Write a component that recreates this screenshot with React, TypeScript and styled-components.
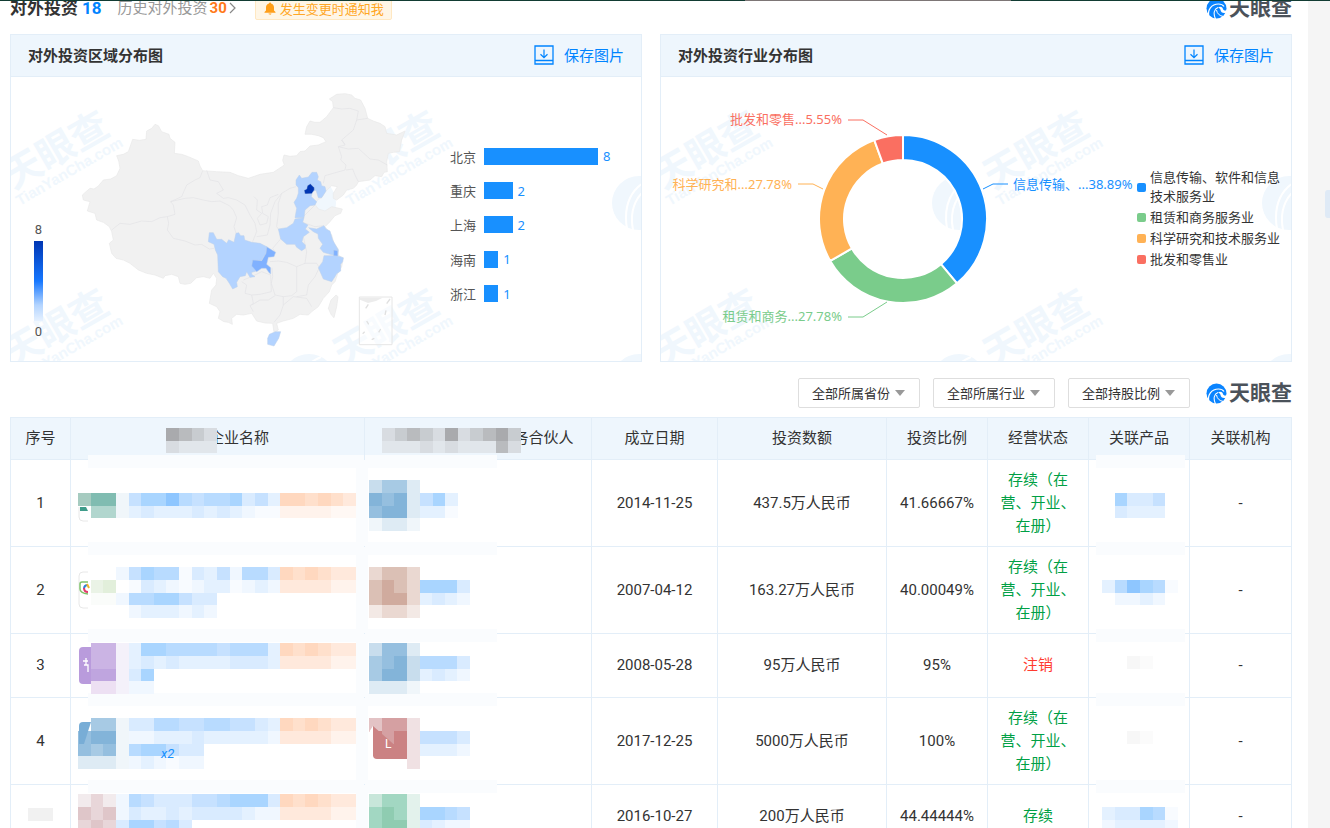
import React from "react";
import styled, { createGlobalStyle, css } from "styled-components";

const BLUE = "#1890ff";
const LINE = "#e3eef8";

const GlobalStyle = createGlobalStyle`
  *, *::before, *::after { box-sizing: border-box; }
  body {
    margin: 0;
    background: #fff;
    color: #333;
    font-family: Roboto, "Noto Sans CJK SC", sans-serif;
    font-size: 15px;
  }
  button, select { font-family: inherit; }
  h2, h3 { margin: 0; }
`;

/* ---------- page frame ---------- */

const Page = styled.div`
  display: flex;
  height: 100vh;
  overflow: hidden;
  position: relative;
`;

const TopEdge = styled.div`
  position: absolute;
  top: 0;
  left: 0;
  right: 0;
  height: 1px;
  z-index: 5;
  background: linear-gradient(90deg, #123c33 0 56%, #7d7676 56% 76%, #123c33 76%);
`;

const Main = styled.main`
  flex: 1;
  min-width: 0;
  padding: 0 16px 0 10px;
`;

const Rail = styled.aside`
  flex: none;
  width: 22px;
  background: #f5f5f5;
  display: flex;
  justify-content: flex-end;
  padding-top: 190px;
`;

const RailTab = styled.div`
  width: 5px;
  height: 28px;
  background: #dfeaf6;
  border-radius: 3px 0 0 3px;
`;

const Header = styled.header`
  display: flex;
  align-items: center;
  height: 24px;
  margin: -4px 0 14px;
`;

const Title = styled.h2`
  display: flex;
  gap: 4px;
  font-size: 17px;
  font-weight: 700;
  line-height: 24px;
`;

const Count = styled.span`
  color: #0084ff;
`;

const HistoryLink = styled.a`
  display: flex;
  align-items: center;
  gap: 2px;
  margin-left: 16px;
  color: #999;
  line-height: 24px;
  text-decoration: none;
  strong { color: #ff7a1a; }
`;

const NotifyButton = styled.button`
  display: flex;
  align-items: center;
  gap: 4px;
  height: 24px;
  margin-left: 19px;
  padding: 0 7px 0 8px;
  border: 1px solid #ffe8c2;
  border-radius: 2px;
  background: #fff6e6;
  color: #ffa726;
  font-size: 13px;
`;

const Brand = styled.div`
  display: flex;
  align-items: center;
  gap: 2px;
  margin-left: auto;
  color: #4b525a;
  font-size: 21px;
  font-weight: 700;
  line-height: 24px;
`;

/* ---------- chart panels ---------- */

const Panels = styled.section`
  display: grid;
  grid-template-columns: 1fr 1fr;
  gap: 18px;
`;

const PanelBox = styled.article`
  min-width: 0;
  border: 1px solid ${LINE};
`;

const PanelHead = styled.div`
  display: flex;
  align-items: center;
  justify-content: space-between;
  height: 42px;
  padding: 0 17px 2px;
  background: #eef6fd;
  border-bottom: 1px solid ${LINE};
`;

const PanelTitle = styled.h3`
  font-size: 15px;
  font-weight: 700;
`;

const SaveButton = styled.button`
  display: flex;
  align-items: center;
  gap: 10px;
  padding: 0;
  border: 0;
  background: none;
  color: #0084ff;
  font-size: 15px;
`;

const PanelBody = styled.div`
  position: relative;
  overflow: hidden;
  height: 284px;
`;

const WatermarkSvg = styled.svg`
  position: absolute;
  top: 0;
  left: 0;
`;

const ChartRow = styled.div`
  position: relative;
  display: flex;
  height: 100%;
`;

const MapRow = styled(ChartRow)`
  padding: 8px 0 6px 23px;
`;

const Scale = styled.div`
  display: flex;
  flex-direction: column;
  align-items: center;
  align-self: flex-end;
  flex: none;
  width: 9px;
  margin: 0 27px 12px 0;
  color: #555;
  font-size: 13px;
  line-height: 22px;
`;

const ScaleBar = styled.div`
  width: 9px;
  height: 80px;
  background: linear-gradient(#0036b3, #1677ff 50%, #b3d4ff 80%, #e6f1ff);
`;

const MapSvg = styled.svg`
  flex: 0 1 350px;
  min-width: 0;
  height: 270px;
`;

const Bars = styled.div`
  display: grid;
  grid-auto-rows: 1fr;
  align-items: center;
  height: 172px;
  margin: 54px 0 0 30px;
  font-size: 13px;
`;

const BarRow = styled.div`
  display: flex;
  align-items: center;
  gap: 8px;
  color: #555;
`;

const Track = styled.div`
  display: flex;
  align-items: center;
  width: 114px;
`;

const Bar = styled.div`
  flex: none;
  height: 17px;
  background: ${BLUE};
`;

const BarValue = styled.span`
  margin-left: 5px;
  color: ${BLUE};
  font-family: "Noto Sans", sans-serif;
`;

const DonutSvg = styled.svg`
  flex: 0 1 470px;
  min-width: 0;
  height: 284px;
  overflow: visible;
  font-family: "Noto Sans", "Noto Sans CJK SC", sans-serif;
  font-size: 13px;
`;

const Legend = styled.ul`
  list-style: none;
  width: 146px;
  margin: 91px 0 0 6px;
  padding: 0;
  display: flex;
  flex-direction: column;
  gap: 2px;
  font-size: 13px;
  line-height: 19px;
`;

const LegendItem = styled.li`
  display: flex;
  align-items: center;
  gap: 4px;
`;

const Swatch = styled.i<{ $color: string }>`
  flex: none;
  width: 9px;
  height: 9px;
  border-radius: 2px;
  background: ${(p) => p.$color};
`;

/* ---------- filters ---------- */

const Toolbar = styled.div`
  display: flex;
  justify-content: flex-end;
  align-items: center;
  gap: 13px;
  margin: 16px 0 9px;
`;

const SelectWrap = styled.label`
  position: relative;
  display: block;
  &::after {
    content: "";
    position: absolute;
    right: 15px;
    top: 12px;
    border: 5px solid transparent;
    border-top: 6px solid #999;
    border-bottom: 0;
    pointer-events: none;
  }
`;

const Select = styled.select`
  appearance: none;
  width: 122px;
  height: 30px;
  padding: 0 26px 0 13px;
  border: 1px solid #dedede;
  border-radius: 2px;
  background: #fff;
  color: #333;
  font-size: 13px;
`;

const ToolbarBrand = styled(Brand)`
  margin-left: 3px;
`;

/* ---------- table ---------- */

const Table = styled.table`
  width: 100%;
  table-layout: fixed;
  border-collapse: collapse;
  line-height: 23px;
  text-align: center;
`;

const Col = styled.col<{ $w?: number }>`
  ${(p) => p.$w && css`width: ${p.$w}px;`}
`;

const Th = styled.th`
  height: 42px;
  padding: 0;
  border: 1px solid ${LINE};
  background: #eef6fd;
  font-weight: 400;
`;

const HeadCell = styled.div`
  display: flex;
  align-items: center;
  justify-content: center;
  svg {
    position: relative;
    margin: 4px -8px 0 0;
  }
`;

const Tr = styled.tr<{ $short?: boolean }>`
  height: ${(p) => (p.$short ? 64 : 87)}px;
`;

const Td = styled.td`
  padding: 0 10px;
  border: 1px solid ${LINE};
`;

const veil = css`
  content: "";
  position: absolute;
  background: #fafcfe;
`;

/* Cells whose content is pixelated, with a pale veil across their borders. */
const MaskedTd = styled.td<{ $kind: "name" | "partner" | "product" }>`
  position: relative;
  padding: ${(p) => (p.$kind === "name" ? "5px 0 0 7px" : p.$kind === "partner" ? "5px 0 0 4px" : "5px 0 0 2px")};
  border: 1px solid ${LINE};
  svg {
    display: block;
    position: relative;
    z-index: 1;
    margin: ${(p) => (p.$kind === "product" ? "0 auto" : "0")};
  }
  &::after {
    ${veil}
    top: -5px;
    height: 13px;
    left: ${(p) => (p.$kind === "name" ? 17 : p.$kind === "partner" ? 0 : 7)}px;
    right: ${(p) => (p.$kind === "name" ? 0 : p.$kind === "partner" ? 94 : 4)}px;
  }
  ${(p) =>
    p.$kind === "partner" &&
    css`
      &::before {
        ${veil}
        top: 0;
        bottom: 0;
        left: -9px;
        width: 12px;
      }
    `}
`;

const Status = styled.span<{ $off?: boolean }>`
  color: ${(p) => (p.$off ? "#ff3b30" : "#00a045")};
`;

/* ---------- drawings ---------- */

function BrandMark({ size = 21 }: { size?: number }) {
  return (
    <svg width={size} height={size} viewBox="0 0 42 42" aria-hidden="true">
      <circle cx="21" cy="21" r="20" fill="#0a84ff" />
      <path d="M6 38C2 24 11 12 25 12c5 0 9 2 11 5" fill="none" stroke="#fff" strokeWidth="2.4" />
      <path d="M24 19c4-3 9-1 10 3 1 3 4 4 8 2v5c-8 3-12 0-13-5-1-3-2-4-5-5z" fill="#fff" />
      <path d="M24 19c-8 3-10 12-5 23" fill="none" stroke="#fff" strokeWidth="2.2" />
      <path d="M21 24c1 7 6 12 14 13" fill="none" stroke="#fff" strokeWidth="2" />
    </svg>
  );
}

function SaveIcon() {
  return (
    <svg width="20" height="20" viewBox="0 0 20 20" fill="none" stroke="#0084ff" aria-hidden="true">
      <path d="M1 1h18v18H1zM1 15.5h18" strokeWidth="1.3" />
      <path d="M10 4.5v8M6.5 9.3l3.5 3.4 3.5-3.4" strokeWidth="1.2" />
    </svg>
  );
}

function BellIcon() {
  return (
    <svg width="12" height="13" viewBox="0 0 12 13" fill="#ff9f1a" aria-hidden="true">
      <path d="M6 0.5c.6 0 1 .4 1 .9 1.9.4 3 2 3 4V8.600l1.500 1.500v.6H.5v-.6L2 8.600V5.400c0-2 1.100-3.600 3-4 0-.5.4-.9 1-.9zM4.500 11.500h3c-.2.800-.8 1.200-1.500 1.200s-1.300-.4-1.500-1.200z" />
    </svg>
  );
}

function Watermark() {
  const spots = [[46, 75], [376, 75], [46, 253], [376, 253]];
  const marks = [[298, 126], [628, 126], [298, 304], [628, 304]];
  return (
    <WatermarkSvg width="100%" height="284" aria-hidden="true">
      {spots.map(([x, y], i) => (
        <g key={i} transform={`translate(${x} ${y}) rotate(-30)`} fill="#f0f7fd" textAnchor="middle" fontWeight="700">
          <text y="11" fontSize="38" fontFamily="Noto Sans CJK SC, sans-serif">天眼查</text>
          <text x="1" y="28" fontSize="15" fontFamily="Liberation Sans, sans-serif">TianYanCha.com</text>
        </g>
      ))}
      {marks.map(([x, y], i) => (
        <g key={i} transform={`translate(${x} ${y})`}>
          <circle r="27" fill="#f0f7fd" />
          <path d="M-12 26C-16 2-8-16 12-24M-6 27C-10 6-2-10 12-16" fill="none" stroke="#fff" strokeWidth="2" />
        </g>
      ))}
    </WatermarkSvg>
  );
}

const COUNTRY =
  "M37 330L48 320 60 310 72 312 85 303 100 285 122 282 140 272 150 250 146 228 140 212 160 208 175 200 182 180 188 163 208 166 228 163 230 138 245 130 255 118 265 122 275 140 297 148 300 160 315 172 313 205 335 208 355 215 385 228 390 243 398 257 440 260 480 262 505 272 535 280 570 268 610 262 625 252 643 240 638 226 642 210 660 214 680 212 690 200 705 198 720 183 745 180 768 170 760 158 745 152 725 148 705 148 710 125 720 108 735 112 750 112 770 95 790 68 788 50 778 42 800 28 825 26 845 30 855 40 872 45 885 70 893 100 910 108 930 115 945 125 950 145 980 150 1005 138 995 165 988 200 970 202 955 205 950 230 952 260 942 262 935 275 915 272 900 285 865 290 860 300 850 310 830 315 820 330 800 345 790 340 790 325 802 305 785 302 768 318 755 338 742 345 735 358 745 372 765 378 785 365 817 372 812 385 795 392 780 410 765 425 785 450 792 475 805 492 805 510 820 520 815 545 805 560 795 590 785 600 778 620 760 640 745 665 725 680 715 690 690 688 670 700 640 708 620 715 625 735 612 742 608 715 585 714 560 708 545 685 520 690 500 688 485 700 487 718 475 712 462 710 445 700 450 680 440 665 418 655 425 615 438 600 440 580 430 565 420 580 400 575 380 578 362 595 345 598 330 595 325 575 305 568 285 572 280 580 255 570 230 565 205 555 180 535 160 525 138 520 125 505 118 475 130 465 125 440 118 425 100 412 80 405 75 385 52 378 60 350 40 345Z";

const BORDERS = [
  "M125 435L150 415 180 418 215 408 245 410 270 398 292 395 315 388 310 360 302 350 335 335 350 300 375 285 390 278 398 257",
  "M292 395L296 415 292 435 310 460 345 468 375 480 395 478 418 492 432 490",
  "M302 350L345 340 370 338 400 345 425 350 450 348 478 362 490 375 500 398 492 425 498 445",
  "M410 256L420 285 445 290 460 315 440 325 460 340 475 338 500 345 525 360 540 390 555 415 560 440 548 470",
  "M552 335L562 345 560 375 575 385 562 400 570 420 590 415 595 395 578 385 575 365 592 360 600 338 625 328",
  "M635 325L625 355 625 385 620 425 625 432M560 455L592 450 600 420 602 385 615 350 635 325 660 310 678 305",
  "M805 185L835 192 865 190 900 222 925 225 952 240M805 185L815 215 812 225 828 240 825 255 800 262 765 272 760 295",
  "M828 255L848 252 855 270 865 290M815 165L825 180 805 185M893 100L860 105 850 135 815 165 825 178M790 68L815 72 840 70 865 78 860 105",
  "M617 502L608 490 625 470 632 462M600 530L625 528 650 532 680 545 705 535 710 500 700 455M606 548L608 575 604 595 615 630 640 635 665 632 680 620 680 545",
  "M705 535L740 535 748 548 735 575 715 600 710 630 680 635M545 660L570 645 595 645 615 632M640 635L640 660 630 690 612 712M640 660L670 635 710 640 725 665",
  "M520 585L545 575 575 560 602 570 604 620 570 628 545 630 525 625 530 600 515 590M545 630L550 655 540 662 550 680",
  "M700 395L720 375 735 360M698 412L735 425 762 422",
];

const REGIONS: { d: string; fill: string }[] = [
  { fill: "#b3d3ff", d: "M418 443L430 443 440 463 455 463 470 475 476 464 492 472 498 445 506 443 512 452 522 452 524 465 545 472 570 475 590 485 588 505 575 525 548 530 550 545 560 558 545 562 545 568 555 575 540 577 530 560 526 572 510 575 500 592 502 605 488 612 478 595 468 580 458 575 445 560 443 510 436 495 432 478 415 470Z" },
  { fill: "#80b1ff", d: "M590 485L617 502 612 515 595 517 590 538 602 548 602 567 596 562 588 550 575 550 560 560 545 543 548 525 575 527 588 505Z" },
  { fill: "#b3d3ff", d: "M678 285L688 270 695 280 715 276 726 262 740 262 745 275 742 285 752 290 755 302 765 305 768 318 755 338 745 338 738 316 728 318 724 335 740 350 735 360 720 362 705 375 702 398 675 398 680 370 672 352 680 340 685 325 685 308 678 300Z" },
  { fill: "#0036b3", d: "M712 302L721 296 733 308 733 315 725 326 705 327 702 316 710 312Z" },
  { fill: "#b3d3ff", d: "M675 402L702 398 698 412 714 420 706 432 718 442 700 455 696 470 706 480 706 490 695 497 680 487 675 478 650 478 632 462 625 432 650 428 670 415Z" },
  { fill: "#b3d3ff", d: "M716 428L740 432 762 422 768 432 780 438 788 465 805 495 803 512 790 510 780 508 760 502 750 490 758 478 745 460 744 447 730 440Z" },
  { fill: "#b3d3ff", d: "M762 512L800 512 820 518 818 530 812 538 812 558 800 566 795 575 785 590 760 582 745 548 758 530Z" },
  { fill: "#80b1ff", d: "M791 495L803 497 803 513 791 512Z" },
  { fill: "#b3d3ff", d: "M598 748L616 740 632 740 626 760 612 783 593 778 593 760Z" },
];

function ChinaMap() {
  return (
    <MapSvg viewBox="0 0 1050 810" role="img" aria-label="对外投资区域分布图" strokeLinejoin="round">
      <path d={COUNTRY} fill="#f1f1f1" stroke="#e8e8e8" strokeWidth="2" />
      <path d="M798 630l6 5-4 30-8 33-8-8-9-20 8-25z" fill="#f1f1f1" stroke="#e8e8e8" strokeWidth="2" />
      {BORDERS.map((d) => (
        <path key={d} d={d} fill="none" stroke="#e2e3e5" strokeWidth="2" />
      ))}
      <path d="M728 318l10-2 4 22-8 8-10-12z" fill="#f1f1f1" />
      {REGIONS.map((r) => (
        <path key={r.d} d={r.d} fill={r.fill} stroke="#bcd0ea" strokeWidth="1.500" />
      ))}
      <path d="M868 636h98v143h-98z" fill="#fff" fillOpacity=".5" stroke="#e6e6e6" strokeWidth="3" />
      <path d="M870 638h68l-20 10-24 6-24-10z" fill="#ececec" />
      <path d="M895 658l-8 12M890 708l6 10M884 740l-6 6M905 764l8-4M926 742l6-10M945 690l3-14M950 656l10-14" stroke="#e0e0e0" strokeWidth="4" fill="none" />
    </MapSvg>
  );
}

const SLICES = [
  { name: "信息传输、软件和信息技术服务业", label: "信息传输、...38.89%", share: 38.89, color: "#1890ff", line: "322,112 332,107 347,107", x: 352, y: 112, anchor: "start" },
  { name: "租赁和商务服务业", label: "租赁和商务...27.78%", share: 27.78, color: "#7acc8b", line: "226,225 202,240 187,240", x: 181, y: 244, anchor: "end" },
  { name: "科学研究和技术服务业", label: "科学研究和...27.78%", share: 27.78, color: "#ffb255", line: "162,112 152,107 137,107", x: 131, y: 112, anchor: "end" },
  { name: "批发和零售业", label: "批发和零售...5.55%", share: 5.55, color: "#fa6f61", line: "226,58 202,43 187,43", x: 181, y: 47, anchor: "end" },
] as const;

function arc(from: number, to: number) {
  const at = (r: number, t: number) => {
    const a = (t / 100) * Math.PI * 2 - Math.PI / 2;
    return `${(242 + r * Math.cos(a)).toFixed(2)} ${(142 + r * Math.sin(a)).toFixed(2)}`;
  };
  return `M${at(84, from)}A84 84 0 0 1 ${at(84, to)}L${at(59, to)}A59 59 0 0 0 ${at(59, from)}Z`;
}

function Donut() {
  let start = 0;
  return (
    <DonutSvg viewBox="0 0 470 284" role="img" aria-label="对外投资行业分布图">
      {SLICES.map((s) => {
        const from = start;
        start += s.share;
        return (
          <g key={s.name}>
            <path d={arc(from, start)} fill={s.color} stroke="#fff" strokeWidth="2" />
            <polyline points={s.line} fill="none" stroke={s.color} />
            <text x={s.x} y={s.y} textAnchor={s.anchor} fill={s.color}>{s.label}</text>
          </g>
        );
      })}
    </DonutSvg>
  );
}

/* ---------- pixelated blocks ---------- */

const INK: Record<string, string> = {
  a: "#8ec6ff", b: "#a9d5ff", c: "#b8dbff", d: "#c6e1ff", e: "#d9ebff", f: "#e4f1ff", g: "#f0f7ff", h: "#f8fbff",
  o: "#ffd8bf", p: "#ffe0cc", q: "#ffe9dc", r: "#fff3ec", s: "#fff8f4",
  t: "#a6cbc0", u: "#80bcb1", v: "#b1d6ce",
  B: "#83b4d9", C: "#95bfdf", D: "#a7cae4", E: "#c8dded", F: "#deebf4", G: "#f0f6fa",
  P: "#bfa5df", Q: "#cbb4e4", R: "#ede0f3", S: "#f4f1fa",
  M: "#d0ab9e", N: "#dbc0b5", O: "#ead8d1", T: "#f3e9e5",
  X: "#cb8283", Y: "#d5a0a2", Z: "#e3c3c5", W: "#f0e1e3",
  V: "#8fccb1", U: "#a2d7c2", L: "#c8e6da", K: "#e3f2ec",
  x: "#dfc6c9", y: "#e8d6d9", z: "#f2ebed",
  i: "#eaf3e6", j: "#e2efdb", k: "#fafcfa",
  1: "#a9aaad", 2: "#b9bbbe", 3: "#c8ccd0", 4: "#d8dce1", 5: "#e1e6eb", 6: "#f1f1f1", 7: "#f7f7f7", 8: "#fbfbfb",
};

function Mosaic({ rows, children }: { rows: string[]; children?: React.ReactNode }) {
  const cols = Math.max(...rows.map((r) => r.length));
  const w = Math.round(cols * 12.65);
  const h = Math.round(rows.length * 12.7);
  const cw = w / cols;
  const ch = h / rows.length;
  return (
    <svg width={w} height={h} viewBox={`0 0 ${w} ${h}`} aria-hidden="true">
      <g shapeRendering="crispEdges">
        {rows.flatMap((r, y) =>
          [...r].map((k, x) =>
            INK[k] ? <rect key={`${x}-${y}`} x={x * cw} y={y * ch} width={cw} height={ch} fill={INK[k]} /> : null
          )
        )}
      </g>
      {children}
    </svg>
  );
}

type Row = {
  no?: string;
  date: string;
  amount: string;
  ratio: string;
  status: string;
  short?: boolean;
  name: string[];
  nameExtra?: React.ReactNode;
  partner: string[];
  partnerExtra?: React.ReactNode;
  product: string[];
};

const ACTIVE = "存续（在营、开业、在册）";

const ROWS: Row[] = [
  {
    no: "1", date: "2014-11-25", amount: "437.5万人民币", ratio: "41.66667%", status: ACTIVE,
    name: [".", "tuuGdbbacdccbedfoopopq", ".vvGfefffefefghhrrrrss", "."],
    nameExtra: (
      <>
        <path d="M1 27v10q0 4 4 4h5" fill="none" stroke="#e8e8e8" />
        <path d="M2 27h6l2 4H2z" fill="#3f9c8a" />
      </>
    ),
    partner: ["EDDF", "BCBFdbf", "CBBFffh", "GFFG"],
    product: [".", ".beed.", ".efff.", "."],
  },
  {
    no: "2", date: "2007-04-12", amount: "163.27万人民币", ratio: "40.00049%", status: ACTIVE,
    name: ["...gdbcchefdgcceopopqq", ".ij.hefghgffhgfgqqqqrr", ".kkgccbbdee", "....gfffgfg"],
    nameExtra: (
      <>
        <path d="M10 5H5q-4 0-4 4v28q0 4 4 4h5" fill="none" stroke="#e8e8e8" />
        <path d="M10 15H4q-2 0-2 2v5q0 4 8 5" fill="none" stroke="#7fc36a" strokeWidth="1.500" />
        <path d="M10 18q-4 0-4 4" fill="none" stroke="#2f7fd6" strokeWidth="2" />
        <path d="M6 21q0 4 4 4" fill="none" stroke="#e23b6d" strokeWidth="2" />
        <path d="M9 17l2 4" stroke="#f0b429" strokeWidth="2" />
      </>
    ),
    partner: ["ONNO", "NMNObbbe", "NMMOfefg", "TOOT"],
    product: [".", "fcabch", ".ggfg.", "."],
  },
  {
    no: "3", date: "2008-05-28", amount: "95万人民币", ratio: "95%", status: "注销", short: true,
    name: [".QQSfbbccccdcccfopopqq", ".QQSfefeffffeeefqqqqrr", ".PPSeb", ".RRSgg"],
    nameExtra: (
      <>
        <path d="M13 4H5Q1 4 1 8v29q0 4 4 4h8z" fill="#b99bdc" />
        <path d="M5 18h5M8 15v7M6 22h4v7" fill="none" stroke="#fff" strokeWidth="1.300" />
      </>
    ),
    partner: ["ECCF", "DCBEccce", "DBBEfefg", "FFFG"],
    product: [".", "..78..", ".", "."],
  },
  {
    no: "4", date: "2017-12-25", amount: "5000万人民币", ratio: "100%", status: ACTIVE,
    name: [".DDGeeccddccddefopopqq", "CBBGggfffefffffgqqqqrr", "CDCGcbbdee", "FFFGgfghgg"],
    nameExtra: (
      <>
        <path d="M13 4H5Q1 4 1 8v18h5z" fill="#78add6" />
        <text x="83" y="40" fontSize="13" fontStyle="italic" fill={BLUE}>x2</text>
      </>
    ),
    partner: ["ZYYW", "XYXWddde", "XXXWfffg", "...W"],
    partnerExtra: (
      <>
        <path d="M0 14l4-6v30l2 3H0z" fill="#fff" />
        <path d="M4 8l34 30v3H8q-4 0-4-4z" fill="#cb8283" />
        <text x="16" y="30" fontSize="12" fill="#fff">L</text>
      </>
    ),
    product: [".", "..78..", ".", "."],
  },
  {
    date: "2016-10-27", amount: "200万人民币", ratio: "44.44444%", status: "存续", short: true,
    name: ["zyzgcdeeeddcbbbeopopqq", "xyxgeffefeeeefggqqqqrr", "yxyebbdce", "...ggfg"],
    partner: ["LUUK", "UVUKbbcd", "UVVKefgg", "KUUK"],
    product: [".", "feebch", "gffffg", "."],
  },
];

function Filter({ label }: { label: string }) {
  return (
    <SelectWrap>
      <Select aria-label={label} defaultValue={label}>
        <option>{label}</option>
      </Select>
    </SelectWrap>
  );
}

function Panel({ title, children }: { title: string; children: React.ReactNode }) {
  return (
    <PanelBox>
      <PanelHead>
        <PanelTitle>{title}</PanelTitle>
        <SaveButton type="button"><SaveIcon />保存图片</SaveButton>
      </PanelHead>
      <PanelBody>
        <Watermark />
        {children}
      </PanelBody>
    </PanelBox>
  );
}

const CITIES: [string, number][] = [["北京", 8], ["重庆", 2], ["上海", 2], ["海南", 1], ["浙江", 1]];

export default function App() {
  return (
    <Page>
      <GlobalStyle />
      <TopEdge />
      <Main>
        <Header>
          <Title>对外投资<Count>18</Count></Title>
          <HistoryLink href="#history">
            历史对外投资<strong>30</strong>
            <svg width="7" height="12" viewBox="0 0 7 12" fill="none" stroke="#888" strokeWidth="1.200" aria-hidden="true">
              <path d="M1 1l5 5-5 5" />
            </svg>
          </HistoryLink>
          <NotifyButton type="button"><BellIcon />发生变更时通知我</NotifyButton>
          <Brand><BrandMark />天眼查</Brand>
        </Header>

        <Panels>
          <Panel title="对外投资区域分布图">
            <MapRow>
              <Scale><span>8</span><ScaleBar /><span>0</span></Scale>
              <ChinaMap />
              <Bars>
                {CITIES.map(([city, n]) => (
                  <BarRow key={city}>
                    <span>{city}</span>
                    <Track>
                      <Bar style={{ width: `${(n / 8) * 100}%` }} />
                      <BarValue>{n}</BarValue>
                    </Track>
                  </BarRow>
                ))}
              </Bars>
            </MapRow>
          </Panel>
          <Panel title="对外投资行业分布图">
            <ChartRow>
              <Donut />
              <Legend>
                {SLICES.map((s) => (
                  <LegendItem key={s.name}><Swatch $color={s.color} /><span>{s.name}</span></LegendItem>
                ))}
              </Legend>
            </ChartRow>
          </Panel>
        </Panels>

        <Toolbar>
          <Filter label="全部所属省份" />
          <Filter label="全部所属行业" />
          <Filter label="全部持股比例" />
          <ToolbarBrand><BrandMark />天眼查</ToolbarBrand>
        </Toolbar>

        <Table>
          <colgroup>
            <Col $w={60} /><Col /><Col $w={227} /><Col $w={126} /><Col $w={169} />
            <Col $w={101} /><Col $w={101} /><Col $w={101} /><Col $w={102} />
          </colgroup>
          <thead>
            <tr>
              <Th>序号</Th>
              <Th><HeadCell><Mosaic rows={["1234", "4555"]} />企业名称</HeadCell></Th>
              <Th><HeadCell><Mosaic rows={["43234143213", "55545455524"]} />务合伙人</HeadCell></Th>
              <Th>成立日期</Th>
              <Th>投资数额</Th>
              <Th>投资比例</Th>
              <Th>经营状态</Th>
              <Th>关联产品</Th>
              <Th>关联机构</Th>
            </tr>
          </thead>
          <tbody>
            {ROWS.map((r) => (
              <Tr key={r.date} $short={r.short}>
                <Td>{r.no ?? <Mosaic rows={["66"]} />}</Td>
                <MaskedTd $kind="name"><Mosaic rows={r.name}>{r.nameExtra}</Mosaic></MaskedTd>
                <MaskedTd $kind="partner"><Mosaic rows={r.partner}>{r.partnerExtra}</Mosaic></MaskedTd>
                <Td>{r.date}</Td>
                <Td>{r.amount}</Td>
                <Td>{r.ratio}</Td>
                <Td><Status $off={r.status === "注销"}>{r.status}</Status></Td>
                <MaskedTd $kind="product"><Mosaic rows={r.product} /></MaskedTd>
                <Td>-</Td>
              </Tr>
            ))}
          </tbody>
        </Table>
      </Main>
      <Rail><RailTab /></Rail>
    </Page>
  );
}
